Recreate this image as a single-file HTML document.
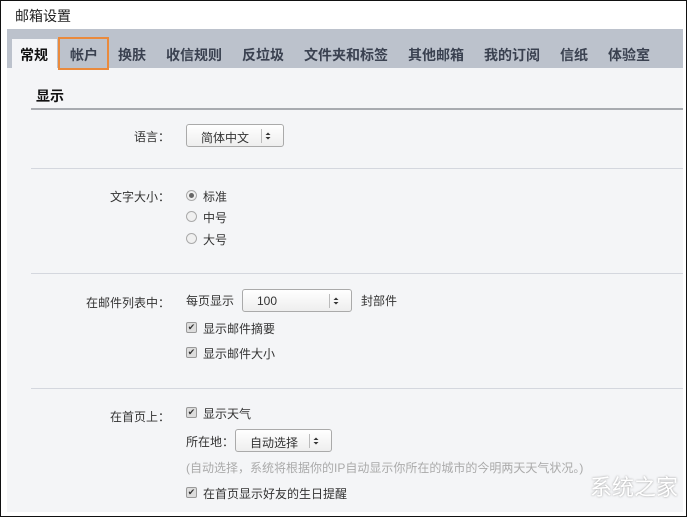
<!DOCTYPE html>
<html><head><meta charset="utf-8"><style>
*{margin:0;padding:0;box-sizing:border-box}
body{width:687px;height:517px;overflow:hidden;background:#fff;font-family:"Liberation Sans","Noto Sans CJK SC",sans-serif;color:#333;position:relative}
.frame{position:absolute;left:0;top:0;width:687px;height:517px;border:1.5px solid #111}
.t{position:absolute;font-size:13px;white-space:nowrap}
.title{left:15px;top:6px;font-size:14px;color:#222}
.bar{position:absolute;left:7px;top:29px;width:676px;height:39px;background:#bcc2cc}
.panel{position:absolute;left:7px;top:68px;width:676px;height:444px;background:#f4f5f7}
.tab{position:absolute;top:45px;font-size:14px;font-weight:bold;color:#3a4150}
.active{position:absolute;left:12px;top:39px;width:45px;height:30px;background:#f4f5f7}
.orange{position:absolute;left:58px;top:37px;width:51px;height:33px;border:2.5px solid #ea8a3c}
.hr{position:absolute;left:31px;width:652px;height:1px;background:#d4d7de}
.lab{position:absolute;width:100px;left:70px;text-align:right;font-size:12px;color:#333}
.sel{position:absolute;height:23px;border:1px solid #aaa;border-radius:3px;background:linear-gradient(#fff,#eee);font-size:12px;padding:4px 0 0 14px}
.sel svg{position:absolute;right:8px;top:4px}
.radio{position:absolute;width:11px;height:11px;border:1px solid #aaa;border-radius:50%;background:#f0f0f0}
.cb{position:absolute;width:11px;height:11px;border:1px solid #999;border-radius:2px;background:#ddd;font-size:9px;line-height:9px;text-align:center;color:#333}
.s{font-size:12px}
</style></head><body>
<div class="frame"></div>
<div class="t title">邮箱设置</div>
<div class="bar"></div>
<div class="panel"></div>
<div class="active"></div>
<div class="tab" style="left:20px;color:#111">常规</div>
<div class="tab" style="left:70px">帐户</div>
<div class="tab" style="left:118px">换肤</div>
<div class="tab" style="left:166px">收信规则</div>
<div class="tab" style="left:242px">反垃圾</div>
<div class="tab" style="left:304px">文件夹和标签</div>
<div class="tab" style="left:408px">其他邮箱</div>
<div class="tab" style="left:484px">我的订阅</div>
<div class="tab" style="left:560px">信纸</div>
<div class="tab" style="left:608px">体验室</div>
<div class="orange"></div>
<div class="t" style="left:36px;top:86px;font-size:14px;font-weight:bold;color:#111">显示</div>
<div class="hr" style="top:108px;height:2px;background:#a8abb0"></div>

<div class="lab" style="top:128px">语言：</div>
<div class="sel" style="left:186px;top:124px;width:98px">简体中文<svg width="14" height="14"><line x1="0.5" y1="0" x2="0.5" y2="14" stroke="#bbb"/><path d="M7 3.5l2.5 2.5h-5zM7 10.5l2.5-2.5h-5z" fill="#333"/></svg></div>
<div class="hr" style="top:168px"></div>

<div class="lab" style="top:188px">文字大小：</div>
<div class="radio" style="left:186px;top:190px"><div style="width:5px;height:5px;border-radius:50%;background:#666;margin:2px"></div></div>
<div class="t s" style="left:203px;top:188px">标准</div>
<div class="radio" style="left:186px;top:211px"></div>
<div class="t s" style="left:203px;top:209px">中号</div>
<div class="radio" style="left:186px;top:233px"></div>
<div class="t s" style="left:203px;top:231px">大号</div>
<div class="hr" style="top:273px"></div>

<div class="lab" style="top:294px">在邮件列表中：</div>
<div class="t s" style="left:186px;top:292px">每页显示</div>
<div class="sel" style="left:242px;top:289px;width:110px">100<svg width="14" height="14"><line x1="0.5" y1="0" x2="0.5" y2="14" stroke="#bbb"/><path d="M7 3.5l2.5 2.5h-5zM7 10.5l2.5-2.5h-5z" fill="#333"/></svg></div>
<div class="t s" style="left:361px;top:292px">封部件</div>
<div class="cb" style="left:186px;top:322px">✔</div>
<div class="t s" style="left:203px;top:320px">显示邮件摘要</div>
<div class="cb" style="left:186px;top:347px">✔</div>
<div class="t s" style="left:203px;top:345px">显示邮件大小</div>
<div class="hr" style="top:388px"></div>

<div class="lab" style="top:408px">在首页上：</div>
<div class="cb" style="left:186px;top:407px">✔</div>
<div class="t s" style="left:203px;top:405px">显示天气</div>
<div class="t s" style="left:186px;top:433px">所在地：</div>
<div class="sel" style="left:235px;top:429px;width:97px">自动选择<svg width="14" height="14"><line x1="0.5" y1="0" x2="0.5" y2="14" stroke="#bbb"/><path d="M7 3.5l2.5 2.5h-5zM7 10.5l2.5-2.5h-5z" fill="#333"/></svg></div>
<div class="t s" style="left:186px;top:459px;color:#aaa">(自动选择，系统将根据你的IP自动显示你所在的城市的今明两天天气状况。)</div>
<div class="cb" style="left:186px;top:487px">✔</div>
<div class="t s" style="left:203px;top:485px">在首页显示好友的生日提醒</div>
<div class="t" style="left:590px;top:470px;font-size:22px;color:#fff;text-shadow:0 0 2px #999">系统之家</div>
</body></html>
